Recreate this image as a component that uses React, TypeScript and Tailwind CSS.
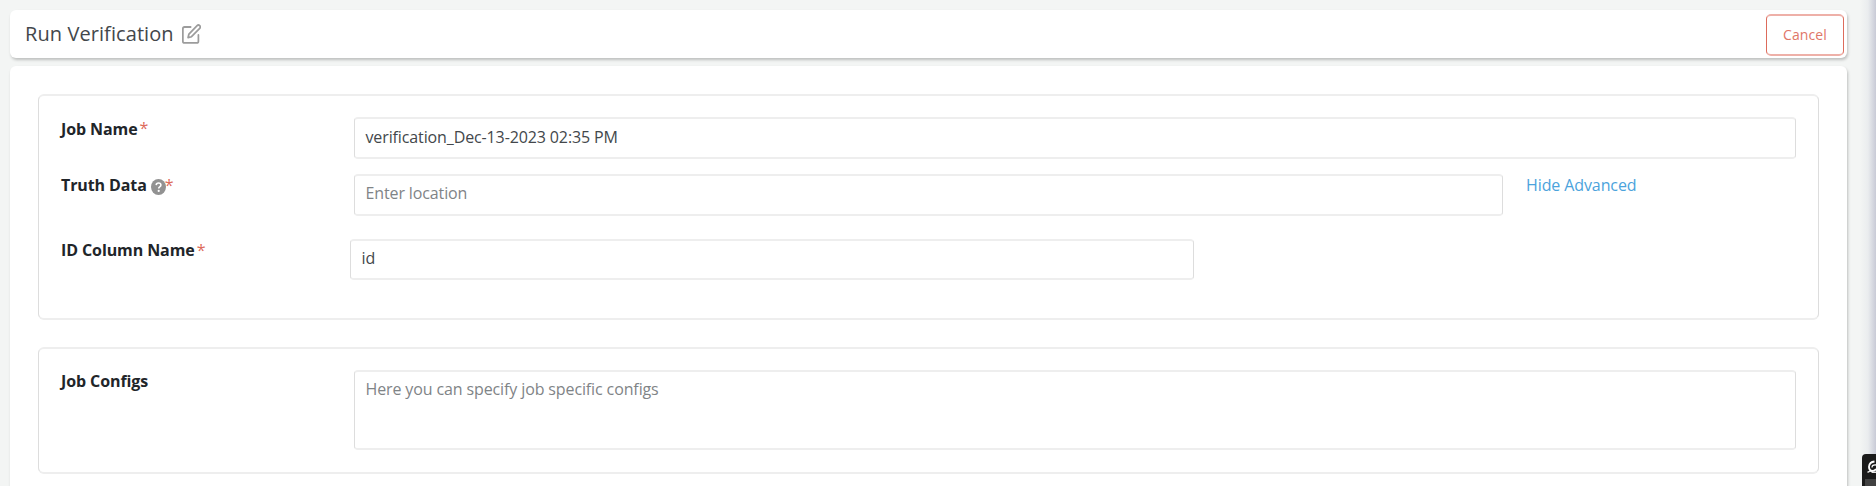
import type { ReactNode } from "react";

function Panel({ className, children }: { className: string; children: ReactNode }) {
  return (
    <section
      className={`ml-7 w-[1781px] shrink-0 rounded-md border-x border-y-2 border-x-[#dddddd] border-y-[#eeeeee] bg-white ${className}`}
    >
      {children}
    </section>
  );
}

function Label({ className = "", children }: { className?: string; children: ReactNode }) {
  return (
    <div className={`flex shrink-0 whitespace-nowrap text-[16px] leading-6 font-bold tracking-[-0.1px] text-[#212529] ${className}`}>
      {children}
    </div>
  );
}

function Star({ className = "" }: { className?: string }) {
  return <span className={`font-normal text-[#dd6b5b] ${className}`}>*</span>;
}

function Field({ className, children }: { className: string; children: ReactNode }) {
  return (
    <div
      className={`shrink-0 rounded-[4px] border-x border-y-2 border-x-[#dddddd] border-y-[#eeeeee] pl-[10.5px] text-[16px] leading-6 tracking-[-0.12px] whitespace-nowrap ${className}`}
    >
      {children}
    </div>
  );
}

function EditIcon() {
  return (
    <svg className="mt-[14px] ml-[8px] h-5 w-[19px]" viewBox="1 0.6 22 22.6" preserveAspectRatio="none" fill="none" stroke="#9c9c9c" strokeWidth="2" strokeLinejoin="round" strokeLinecap="round">
      <path d="M11 4H4a2 2 0 0 0-2 2v14a2 2 0 0 0 2 2h14a2 2 0 0 0 2-2v-7" />
      <path d="M18.500 2.500a2.121 2.121 0 0 1 3 3L12 15l-4 1 1-4 9.500-9.500z" />
    </svg>
  );
}

export default function App() {
  return (
    <div className="relative flex h-[486px] w-[1876px] flex-col overflow-hidden bg-[#f3f5f4] pt-[10px] pl-[10px] font-['Open_Sans','Noto_Sans',sans-serif]">
      <header className="flex h-12 w-[1837px] shrink-0 rounded-md bg-white shadow-[1px_2px_3px_rgba(0,0,0,0.22)]">
        <h1 className="mt-[10px] ml-[15px] text-[20px] leading-7 tracking-[0.08px] whitespace-nowrap text-[#43474b]">Run Verification</h1>
        <EditIcon />
        <button className="mt-1 mr-[3px] ml-auto h-[42px] w-[78px] rounded-[5px] border-x border-y-2 border-x-[#dd6b5b] border-y-[#eeb0a8] pb-[2px] text-[14px] tracking-[0.1px] text-[#df7668]">
          Cancel
        </button>
      </header>

      <main className="mt-2 flex h-[440px] w-[1837px] shrink-0 flex-col rounded-md bg-white pt-7 shadow-[1px_2px_3px_rgba(0,0,0,0.22)]">
        <Panel className="h-[226px]">
          <div className="mt-[21px] flex h-[42px] pl-[22px]">
            <Label className="w-[293px]">
              Job Name<Star className="-mt-px ml-[2px]" />
            </Label>
            <Field className="h-[42px] w-[1442px] pt-[6px] text-[#43474b]">verification_Dec-13-2023 02:35 PM</Field>
          </div>
          <div className="mt-[15px] flex h-[42px] pl-[22px]">
            <Label className="-mt-px w-[293px]">
              Truth Data
              <svg className="mt-[6px] ml-[4px] h-4 w-[15px]" viewBox="0 0 15 16" preserveAspectRatio="none">
                <ellipse cx="7.5" cy="8" rx="7.5" ry="8" fill="#929292" />
                <path d="M5.200 6.100Q5.300 4 7.600 4Q9.900 4 9.900 6.100Q9.900 7.200 8.700 7.900Q7.700 8.500 7.700 9.500" fill="none" stroke="white" strokeWidth="1.600" />
                <circle cx="7.700" cy="11.900" r="1.100" fill="white" />
              </svg>
              <Star className="-ml-px" />
            </Label>
            <Field className="h-[42px] w-[1149px] pt-[5px] text-[#7f8487]">Enter location</Field>
            <a className="-mt-px ml-[23px] text-[16px] leading-6 tracking-[-0.1px] text-[#4ba3dc]">Hide Advanced</a>
          </div>
          <div className="mt-[23px] flex h-[41px] pl-[22px]">
            <Label className="-mt-px w-[289px]">
              ID Column Name<Star className="ml-[2px]" />
            </Label>
            <Field className="h-[41px] w-[844px] pt-[5px] text-[#43474b]">id</Field>
          </div>
        </Panel>

        <Panel className="mt-[27px] h-[127px]">
          <div className="mt-[21px] flex pl-[22px]">
            <Label className="-mt-px w-[293px]">Job Configs</Label>
            <Field className="h-20 w-[1442px] pt-[5px] text-[#7f8487]">Here you can specify job specific configs</Field>
          </div>
        </Panel>
      </main>

      <div className="absolute top-0 right-0 h-full w-4 bg-linear-to-r from-transparent via-[#e6e9ec]/70 to-[#c8cad6]" />
      <div className="absolute right-0 bottom-0 h-8 w-[14px] overflow-hidden rounded-tl-[4px] bg-[#1b1b1b]">
        <svg className="h-8 w-[14px]" viewBox="0 0 14 32" fill="none">
          <rect x="3" y="25" width="11" height="7" fill="#414141" />
          <path d="M5.500 18.300L8.500 16.800L10.500 18.300H14" stroke="#e8e8e8" strokeWidth="1.500" />
          <path d="M12.500 7.500Q7.500 8 7 12.500Q6.800 16 10 17Q13 17 14 15" stroke="white" strokeWidth="1.800" />
          <path d="M10 13.500Q10 10.500 14 11" stroke="white" strokeWidth="1.300" />
        </svg>
      </div>
    </div>
  );
}
